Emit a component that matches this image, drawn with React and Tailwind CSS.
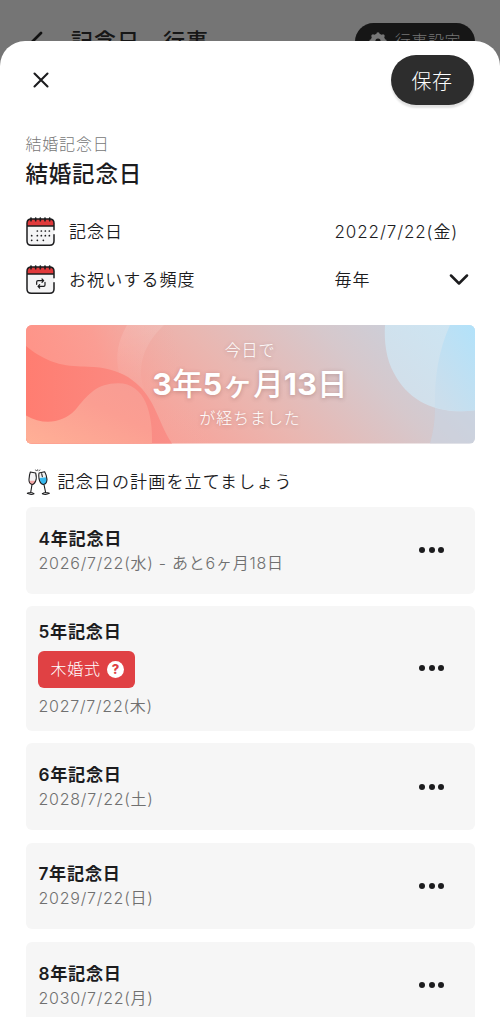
const plans = [
  { title: '4年記念日', date: '2026/7/22(水) - あと6ヶ月18日' },
  { title: '5年記念日', date: '2027/7/22(木)', badge: '木婚式' },
  { title: '6年記念日', date: '2028/7/22(土)' },
  { title: '7年記念日', date: '2029/7/22(日)' },
  { title: '8年記念日', date: '2030/7/22(月)' },
]

function GearIcon() {
  return (
    <svg className="w-[18px] h-[18px]" viewBox="0 0 18 18" fill="none" stroke="currentColor">
      <circle cx="9" cy="9" r="5" strokeWidth="4.5" />
      <path d="M9 2V16M2 9H16M4 4L14 14M14 4L4 14" strokeWidth="3.4" strokeLinecap="round" />
      <circle cx="9" cy="9" r="2.600" fill="#161616" stroke="none" />
    </svg>
  )
}

function CalendarIcon({ repeat }) {
  return (
    <svg className="w-[30px] h-[30px] shrink-0" viewBox="1 0 90 90" fill="none">
      <rect x="4" y="7" width="81" height="78" rx="13" fill="#f4f4f5" />
      <path d="M4 27V19Q4 6 17 6H72Q85 6 85 19V27Z" fill="#e0393b" />
      <path
        d="M85 38V19Q85 6 72 6H17Q4 6 4 19V72Q4 85 17 85H72Q85 85 85 72V53M4 27H85"
        stroke="#1c1c1e"
        strokeWidth="4.5"
        strokeLinecap="round"
      />
      <path d="M16 3V11M30 3V11M44 3V11M58 3V11M72 3V11" stroke="#1c1c1e" strokeWidth="5" strokeLinecap="round" />
      {repeat ? (
        <path
          d="M33 58V51Q33 47 37 47H52M49 42L54 47L49 52M58 52V60Q58 64 54 64H38M42 59L37 64L42 69"
          stroke="#1c1c1e"
          strokeWidth="3.6"
          strokeLinecap="round"
          strokeLinejoin="round"
        />
      ) : (
        <path
          d="M35 42H35.1M47 42H47.1M59 42H59.1M71 42H71.1M18 56H18.1M35 56H35.1M47 56H47.1M59 56H59.1M71 56H71.1M18 70H18.1M35 70H35.1M53 70H53.1"
          stroke="#1c1c1e"
          strokeWidth="5.2"
          strokeLinecap="round"
        />
      )}
    </svg>
  )
}

function GlassesIcon() {
  return (
    <svg className="w-6 h-[27px] shrink-0" viewBox="0 0 72 81" fill="none">
      {/* left glass */}
      <path d="M13 9L29 12Q33 27 29 36Q24 48 17 46Q8 43 9 31Q10 17 13 9Z" fill="#f4f4f5" />
      <path d="M9 35H29Q25 48 17 47Q9 45 9 35Z" fill="#f3a5a5" />
      <path d="M13 9L29 12Q33 27 29 36Q24 48 17 46Q8 43 9 31Q10 17 13 9ZM18 47L14 71M4 73Q14 68 24 74Q15 79 4 73" stroke="#1c1c1e" strokeWidth="3.2" strokeLinecap="round" strokeLinejoin="round" />
      {/* right glass */}
      <path d="M39 12L56 8Q62 18 63 31Q63 44 54 46Q46 48 41 36Q37 25 39 12Z" fill="#f4f4f5" />
      <path d="M40 27L62 25Q66 44 54 46Q45 48 40 27Z" fill="#35b8ee" />
      <path d="M39 12L56 8Q62 18 63 31Q63 44 54 46Q46 48 41 36Q37 25 39 12ZM54 47L59 71M49 74Q59 68 70 73Q59 79 49 74M47 14L49 23" stroke="#1c1c1e" strokeWidth="3.2" strokeLinecap="round" strokeLinejoin="round" />
      <path d="M28 3L32 5M35 2V5M42 3L39 5" stroke="#1c1c1e" strokeWidth="2" strokeLinecap="round" />
    </svg>
  )
}

function BannerArt() {
  return (
    <svg className="absolute inset-0 w-full h-full" viewBox="0 0 449 118" preserveAspectRatio="none">
      <defs>
        <linearGradient id="base" gradientUnits="userSpaceOnUse" x1="130" y1="118" x2="330" y2="-80">
          <stop offset="0" stopColor="#fa9f95" />
          <stop offset="0.36" stopColor="#eab6b0" />
          <stop offset="0.7" stopColor="#d6c8cc" />
          <stop offset="1" stopColor="#c7d2df" />
        </linearGradient>
        <linearGradient id="left" gradientUnits="userSpaceOnUse" x1="0" y1="60" x2="150" y2="10">
          <stop offset="0" stopColor="#ff9286" />
          <stop offset="0.5" stopColor="#fb9c92" stopOpacity="0.85" />
          <stop offset="1" stopColor="#f0aea6" stopOpacity="0" />
        </linearGradient>
        <linearGradient id="wave" x1="0" y1="0" x2="1" y2="0">
          <stop offset="0" stopColor="#ff7d71" />
          <stop offset="1" stopColor="#f98f88" />
        </linearGradient>
        <linearGradient id="peach" x1="0" y1="1" x2="1" y2="0">
          <stop offset="0" stopColor="#ffb096" />
          <stop offset="0.6" stopColor="#fb9e92" />
          <stop offset="1" stopColor="#f79c94" />
        </linearGradient>
        <linearGradient id="ring" x1="0" y1="0" x2="0" y2="1">
          <stop offset="0" stopColor="#fff" stopOpacity="0.12" />
          <stop offset="1" stopColor="#fff" stopOpacity="0.02" />
        </linearGradient>
        <linearGradient id="sky" x1="1" y1="0" x2="0.3" y2="1">
          <stop offset="0" stopColor="#b2e2fa" />
          <stop offset="1" stopColor="#cbdeec" />
        </linearGradient>
        <linearGradient id="ice" x1="1" y1="0" x2="0" y2="1">
          <stop offset="0" stopColor="#cce6f4" />
          <stop offset="1" stopColor="#d3dde7" />
        </linearGradient>
      </defs>
      <rect width="449" height="118" fill="url(#base)" />
      <rect width="190" height="118" fill="url(#left)" />
      <path d="M101 0C92 16 89 30 93 48C105 50 111 60 118 64C110 40 119 18 138 0Z" fill="url(#ring)" />
      <path d="M0 21C24 41 43 41 62 41.500C95 42 115 57 126 78C133 91 138 107 146 118H0Z" fill="url(#wave)" />
      <path d="M0 90C17 100 36 98 49 85C62 69 71 58 92 58C119 58 127 88 126 118H0Z" fill="url(#peach)" />
      <path d="M409 82Q409 101 404 118H449V82Z" fill="#c7d7e7" opacity="0.5" />
      <path d="M359 0C358 16 360 34 368 48C382 75 410 90 449 85V0Z" fill="url(#ice)" />
      <path d="M424 0C413 24 408 52 409 82Q428 88 449 85V0Z" fill="url(#sky)" />
    </svg>
  )
}

function PlanCard({ title, date, badge }) {
  return (
    <div className={`bg-[#f6f6f6] rounded-[6px] pl-[13px] pr-[30.500px] flex items-center justify-between shrink-0 ${badge ? 'h-[124.500px]' : 'h-[86.500px]'}`}>
      <div className="pt-px">
        <p className="text-[17.200px] leading-6 font-semibold tracking-[0.7px] text-[#1c1c1e]">{title}</p>
        {badge && (
          <div className="-ml-px mt-[7px] mb-[6px] w-[97px] h-[37px] rounded-[6px] bg-[#e04144] text-white flex items-center pl-[13px] gap-[6px]">
            <span className="text-base font-light tracking-[0.8px]">{badge}</span>
            <span className="w-[17px] h-[17px] rounded-full bg-white text-[#e04144] text-[13px] leading-none font-extrabold flex items-center justify-center">?</span>
          </div>
        )}
        <p className="text-base leading-6 font-[350] tracking-[0.75px] text-[#707070]">{date}</p>
      </div>
      <div className="flex gap-[3.500px]">
        <span className="w-[6px] h-[6px] rounded-full bg-[#1c1c1e]"></span>
        <span className="w-[6px] h-[6px] rounded-full bg-[#1c1c1e]"></span>
        <span className="w-[6px] h-[6px] rounded-full bg-[#1c1c1e]"></span>
      </div>
    </div>
  )
}

export default function App() {
  return (
    <div className="relative w-full h-[1017px] overflow-hidden bg-[#757575] font-[Inter,'Noto_Sans_CJK_JP',sans-serif] text-[#1c1c1e]">
      {/* page header, dimmed behind the sheet */}
      <header className="flex items-center h-[41px] pl-[25px] pr-[25px] pt-[41px]">
        <svg className="w-6 h-6" viewBox="0 0 24 24" fill="none" stroke="#111" strokeWidth="2.7" strokeLinecap="round" strokeLinejoin="round">
          <path d="M16 4L6 14L16 24" />
        </svg>
        <h1 className="ml-[22px] pt-px text-[22px] font-medium tracking-[1px] text-[#161616]">記念日、行事</h1>
        <div className="ml-auto w-[120px] h-[37px] rounded-full bg-[#161616] flex items-center justify-center gap-2 text-[#777]">
          <GearIcon />
          <span className="text-base font-light tracking-[0.6px]">行事設定</span>
        </div>
      </header>

      <main className="absolute inset-x-0 top-[41px] bottom-0 bg-white rounded-t-[25px] overflow-hidden px-[25.500px] pt-[14px] flex flex-col">
        <div className="flex items-center justify-between shrink-0">
          <svg className="ml-[7px] w-4 h-4" viewBox="0 0 16 16" fill="none" stroke="#1c1c1e" strokeWidth="2.1" strokeLinecap="round">
            <path d="M1.500 1.500L14.500 14.500M14.500 1.500L1.500 14.500" />
          </svg>
          <button className="w-[83px] h-[50px] mr-px rounded-full bg-[#2d2d2d] text-white text-xl font-light tracking-[0.5px] pt-[3px] shadow-[0_3px_2px_rgba(0,0,0,0.12)]">保存</button>
        </div>

        <p className="mt-[27px] text-base leading-6 font-light tracking-[0.8px] text-[#777]">結婚記念日</p>
        <h2 className="text-[22.500px] leading-9 font-medium tracking-[0.8px]">結婚記念日</h2>

        <div className="mt-[25px] h-[30px] flex items-center shrink-0">
          <CalendarIcon />
          <span className="ml-[13.500px] w-[265.500px] pt-px text-[17px] font-[350] tracking-[1px]">記念日</span>
          <span className="pt-px text-[17px] font-[350] tracking-[0.9px] whitespace-nowrap">2022/7/22(金)</span>
        </div>
        <div className="mt-[18px] h-[30px] flex items-center shrink-0">
          <CalendarIcon repeat />
          <span className="ml-[13.500px] w-[265.500px] pt-px text-[17px] font-[350] tracking-[1.1px]">お祝いする頻度</span>
          <span className="pt-px text-[17px] font-[350] tracking-[0.9px]">毎年</span>
          <svg className="ml-auto mr-[6px] w-5 h-3" viewBox="0 0 20 12" fill="none" stroke="#1c1c1e" strokeWidth="2.5" strokeLinecap="round" strokeLinejoin="round">
            <path d="M2 1.500L10 9.500L18 1.500" />
          </svg>
        </div>

        <section className="relative mt-[30px] h-[118.500px] rounded-[6px] overflow-hidden shrink-0">
          <BannerArt />
          <div className="relative h-full flex flex-col items-center text-white [text-shadow:0_1px_4px_rgba(90,50,50,0.3)]">
            <p className="mt-[13px] text-base leading-6 font-light tracking-[0.8px]">今日で</p>
            <p className="text-[30.500px] leading-[44px] font-bold tracking-[0.15px]">
              3<span className="font-medium">年</span>5<span className="font-medium">ヶ月</span>13<span className="font-medium">日</span>
            </p>
            <p className="text-base leading-6 font-light tracking-[0.9px]">が経ちました</p>
          </div>
        </section>

        <div className="mt-[25px] h-[27px] flex items-center shrink-0">
          <GlassesIcon />
          <span className="ml-[8px] pt-px text-[17px] font-[350] tracking-[1.15px]">記念日の計画を立てましょう</span>
        </div>

        <div className="mt-[11.500px] flex flex-col gap-[12.700px]">
          {plans.map((plan) => (
            <PlanCard key={plan.title} {...plan} />
          ))}
        </div>
      </main>
    </div>
  )
}
